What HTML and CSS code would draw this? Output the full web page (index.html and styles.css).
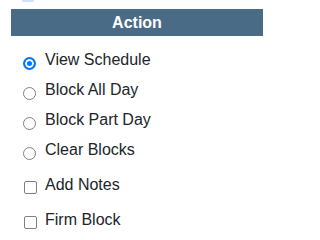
FILE: index.html
```html
<!DOCTYPE html>
<html lang="en">
<head>
<meta charset="utf-8">
<title>Action</title>
<link rel="stylesheet" href="styles.css">
</head>
<body>
<div class="panel">
  <div class="top-tab"></div>
  <div class="header">Action</div>
  <div class="options">
    <label class="row radio-row"><input type="radio" name="action" checked><span>View Schedule</span></label>
    <label class="row radio-row"><input type="radio" name="action"><span>Block All Day</span></label>
    <label class="row radio-row"><input type="radio" name="action"><span>Block Part Day</span></label>
    <label class="row radio-row last-radio"><input type="radio" name="action"><span>Clear Blocks</span></label>
    <label class="row check-row"><input type="checkbox"><span>Add Notes</span></label>
    <label class="row check-row"><input type="checkbox"><span>Firm Block</span></label>
  </div>
</div>
</body>
</html>
```
FILE: styles.css
```css
html, body {
  margin: 0;
  padding: 0;
  background: #ffffff;
}
body {
  font-family: "Liberation Sans", Arial, sans-serif;
  font-size: 16px;
  color: #212529;
}
.panel {
  padding-left: 11px;
  width: 252px;
}
.top-tab {
  width: 12px;
  height: 2px;
  margin-left: 11px;
  background: #cfe2fb;
}
.header {
  margin-top: 7px;
  height: 27px;
  line-height: 27px;
  background: #4a6b86;
  color: #ffffff;
  font-weight: bold;
  text-align: center;
}
.options {
  padding-top: 15px;
  display: flex;
  flex-direction: column;
}
.row {
  display: flex;
  align-items: flex-start;
  line-height: normal;
}
.radio-row {
  height: 30px;
}
.radio-row.last-radio {
  height: 35px;
}
.check-row {
  height: 35px;
}
.row input {
  -webkit-appearance: none;
  appearance: none;
  box-sizing: border-box;
  width: 13px;
  height: 13px;
  margin: 6px 9px 0 12px;
  flex: none;
  background: #ffffff;
  border: 1px solid #808080;
}
.radio-row input {
  border-radius: 50%;
}
.radio-row input:checked {
  border: 2px solid #0075ff;
  background: #0075ff;
  box-shadow: inset 0 0 0 2px #ffffff;
}
.check-row input {
  border-radius: 2px;
  margin-top: 5px;
  margin-left: 13px;
  margin-right: 8px;
}
```
